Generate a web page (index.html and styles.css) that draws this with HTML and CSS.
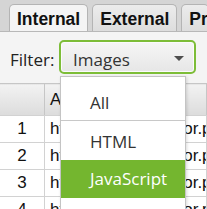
FILE: index.html
```html
<!DOCTYPE html>
<html lang="en">
<head>
<meta charset="utf-8">
<meta name="viewport" content="width=device-width,initial-scale=1">
<title>Internal – Filter</title>
<link rel="stylesheet" href="styles.css">
</head>
<body>

<div class="tabs">
  <div class="tab active">Internal</div>
  <div class="tab">External</div>
  <div class="tab">Pr</div>
</div>

<div class="panel">
  <div class="filter-row">
    <span class="filter-label">Filter:</span>
    <div class="combo">
      <span class="combo-value">Images</span>
      <span class="combo-arrow"></span>
    </div>
  </div>

  <table class="grid">
    <thead>
      <tr><th class="num"></th><th>Address</th></tr>
    </thead>
    <tbody>
      <tr><td class="num">1</td><td>https://www.meditor.png</td></tr>
      <tr><td class="num">2</td><td>https://www.meditor.png</td></tr>
      <tr><td class="num">3</td><td>https://www.meditor.png</td></tr>
      <tr><td class="num">4</td><td>https://www.meditor.png</td></tr>
    </tbody>
  </table>

  <!-- combo popup, open over the table -->
  <ul class="popup">
    <li class="item sep">All</li>
    <li class="item mid">HTML</li>
    <li class="item selected">JavaScript</li>
  </ul>
</div>

</body>
</html>
```

FILE: styles.css
```css
html,body{margin:0;padding:0;}
body{width:207px;height:209px;overflow:hidden;background:#f4f4f4;font-family:"Open Sans",sans-serif;}

/* tab strip */
.tabs{display:flex;gap:4px;height:32px;padding:4px 0 0 9px;box-sizing:border-box;background:#d5d5d5;border-bottom:1px solid #b8b8b8;overflow:hidden;}
.tab{height:28px;padding:0 7px;border:1px solid #b4b4b4;border-bottom:none;border-radius:5px 5px 0 0;background:linear-gradient(#ececec,#dcdcdc);font:bold 17.5px "Liberation Sans",Arial,sans-serif;line-height:29px;color:#111;white-space:nowrap;}
.tab:last-child{flex:1;padding-right:0;}
.tab.active{height:29px;margin-bottom:-1px;background:#f4f4f4;}

/* panel */
.panel{position:relative;}
.filter-row{display:flex;align-items:center;padding:8px 0 0 10px;height:34px;}
.filter-label{width:49px;padding-top:4px;font-size:17px;color:#222;}
.combo{width:137px;height:34px;box-sizing:border-box;display:flex;align-items:center;justify-content:space-between;padding:0 10px 0 12px;border:2px solid #7dbd38;border-radius:5px;background:linear-gradient(#f6f6f6,#e6e6e6);box-shadow:inset 0 0 0 1px #fbfbfb;}
.combo-value{padding-top:4px;font-size:17px;color:#333;line-height:1;}
.combo-arrow{width:0;height:0;border-left:5px solid transparent;border-right:5px solid transparent;border-top:5px solid #4e4e4e;margin-top:2px;}

/* table */
.grid{margin-top:9px;width:100%;border-collapse:collapse;font:17px "Liberation Sans",Arial,sans-serif;color:#111;table-layout:fixed;}
.grid th,.grid td{border:1px solid #d2d2d2;padding:0 0 0 5px;text-align:left;white-space:nowrap;overflow:hidden;}
.grid th{height:31px;font-weight:normal;background:linear-gradient(#f2f2f2,#dcdcdc);border-color:#c6c6c6 #c6c6c6 #d2d2d2;}
.grid td{height:26px;background:#fff;}
.grid .num{width:44px;text-align:center;padding:0;border-left:none;}

/* popup list */
.popup{position:absolute;left:60px;top:44px;width:126px;height:140px;margin:0;padding:5px 0 0;box-sizing:border-box;list-style:none;background:#fff;border:1px solid #c4c4c4;box-shadow:1px 1px 3px rgba(0,0,0,.15);}
.item{height:38px;line-height:38px;padding-left:29px;font-size:17px;color:#333;}
.item.sep{line-height:42px;border-bottom:1px solid #c8c8c8;}
.item.mid{height:39px;line-height:42px;}
.item.selected{background:#74b62f;color:#fff;}
```
